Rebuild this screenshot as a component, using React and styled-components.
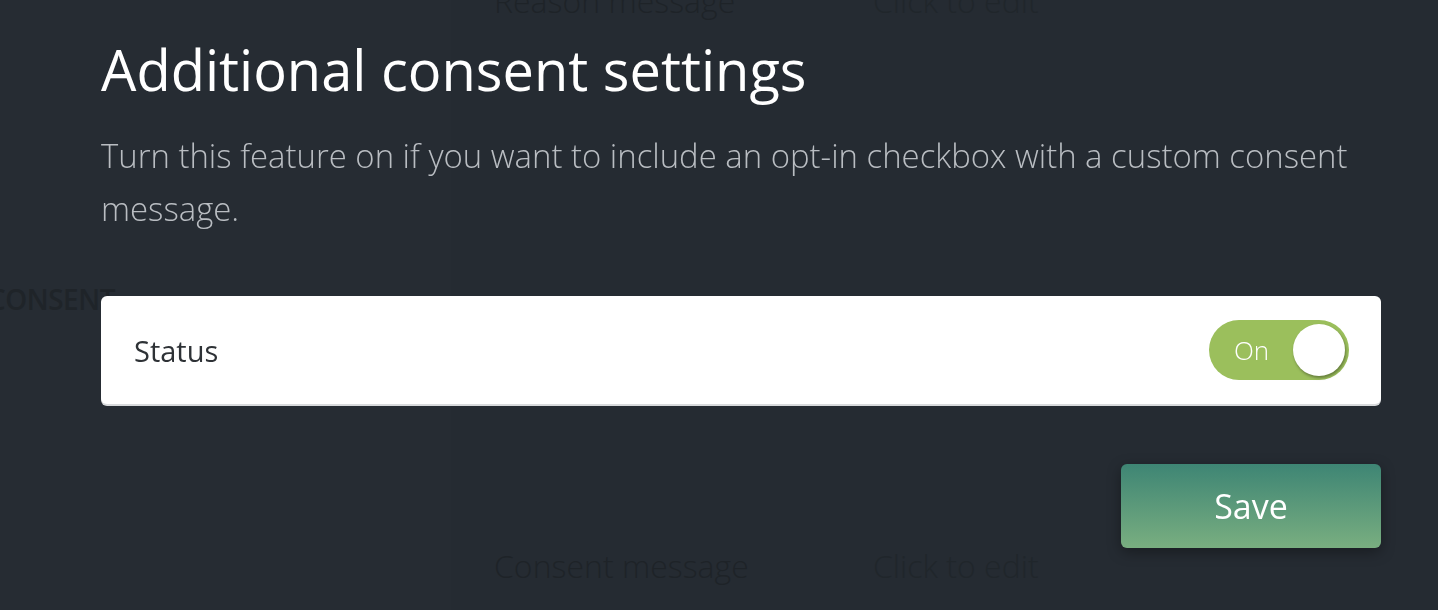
import React, { useState } from "react"
import styled, { createGlobalStyle } from "styled-components"

const GlobalStyle = createGlobalStyle`
  html, body {
    margin: 0;
    padding: 0;
    background: #252b32;
    overflow: hidden;
  }
  * {
    box-sizing: border-box;
  }
`

const App = () => {
  const [enabled, setEnabled] = useState(true)

  return (
    <>
      <GlobalStyle />
      <Page>
        <Sidebar>
          <SectionLabel>Consent</SectionLabel>
        </Sidebar>
        <Panel>
          <Row>
            <RowLabel>Reason message</RowLabel>
            <RowValue>Click to edit</RowValue>
          </Row>
          <Row>
            <RowLabel>Consent message</RowLabel>
            <RowValue>Click to edit</RowValue>
          </Row>
        </Panel>
      </Page>

      <Overlay>
        <Modal>
          <Title>Additional consent settings</Title>
          <Description>
            Turn this feature on if you want to include an opt-in checkbox with a custom consent
            message.
          </Description>

          <Card>
            <CardLabel>Status</CardLabel>
            <Toggle $on={enabled} onClick={() => setEnabled(!enabled)}>
              <ToggleText>{enabled ? "On" : "Off"}</ToggleText>
              <Knob />
            </Toggle>
          </Card>

          <Actions>
            <SaveButton>Save</SaveButton>
          </Actions>
        </Modal>
      </Overlay>
    </>
  )
}

export default App

const Page = styled.div`
  display: flex;
  height: 610px;
  font-family: "Open Sans", "Liberation Sans", sans-serif;
`

const Sidebar = styled.aside`
  width: 451px;
  flex-shrink: 0;
  padding-top: 280px;
  background: #262c33;
`

const SectionLabel = styled.h3`
  margin: 0 0 0 -12px;
  font-size: 28px;
  font-weight: 600;
  text-transform: uppercase;
  color: #1f2429;
  letter-spacing: -0.5px;
`

const Panel = styled.main`
  flex: 1;
  display: flex;
  flex-direction: column;
  gap: 521px;
  padding: 0 43px;
  margin-top: -22px;
  background: #252b32;
`

const Row = styled.div`
  display: flex;
  align-items: center;
  height: 44px;
`

const RowLabel = styled.span`
  width: 379px;
  font-size: 32px;
  font-weight: 300;
  color: #1e2328;
`

const RowValue = styled.span`
  font-size: 32px;
  font-weight: 300;
  color: #20262b;
`

const Overlay = styled.div`
  position: fixed;
  inset: 0;
  font-family: "Open Sans", "Liberation Sans", sans-serif;
`

const Modal = styled.div`
  width: 1280px;
  margin-left: 101px;
  padding-top: 29px;
  display: flex;
  flex-direction: column;
`

const Title = styled.h1`
  margin: 0;
  font-size: 56px;
  line-height: 80px;
  font-weight: 400;
  color: #ffffff;
`

const Description = styled.p`
  margin: 20px 0 0;
  font-size: 32.9px;
  line-height: 53px;
  font-weight: 300;
  color: #b9bdc2;
`

const Card = styled.div`
  margin-top: 61px;
  height: 108px;
  display: flex;
  align-items: center;
  justify-content: space-between;
  padding: 0 32px 0 33px;
  background: #ffffff;
  border-radius: 6px;
  box-shadow: 0 2px 0 #d8dadc;
`

const CardLabel = styled.span`
  font-size: 29px;
  font-weight: 400;
  color: #2e3236;
`

const Toggle = styled.button`
  position: relative;
  width: 140px;
  height: 60px;
  border: 0;
  border-radius: 30px;
  padding: 0 0 0 25px;
  display: flex;
  align-items: center;
  background: ${p => (p.$on ? "#9bbf5c" : "#c7cbcf")};
  cursor: pointer;
`

const ToggleText = styled.span`
  font-family: "Open Sans", sans-serif;
  font-size: 26px;
  font-weight: 300;
  color: #ffffff;
`

const Knob = styled.span`
  position: absolute;
  right: 4px;
  top: 4px;
  width: 52px;
  height: 52px;
  border-radius: 50%;
  background: #ffffff;
  box-shadow: 1px 2px 3px rgba(0, 0, 0, 0.35);
`

const Actions = styled.div`
  display: flex;
  justify-content: flex-end;
  margin-top: 60px;
`

const SaveButton = styled.button`
  width: 260px;
  height: 84px;
  border: 0;
  border-radius: 6px;
  background: linear-gradient(180deg, #3e8574 0%, #79ae80 100%);
  box-shadow: 0 4px 14px rgba(0, 0, 0, 0.35);
  font-family: "Open Sans", sans-serif;
  font-size: 34px;
  color: #ffffff;
  cursor: pointer;
`
